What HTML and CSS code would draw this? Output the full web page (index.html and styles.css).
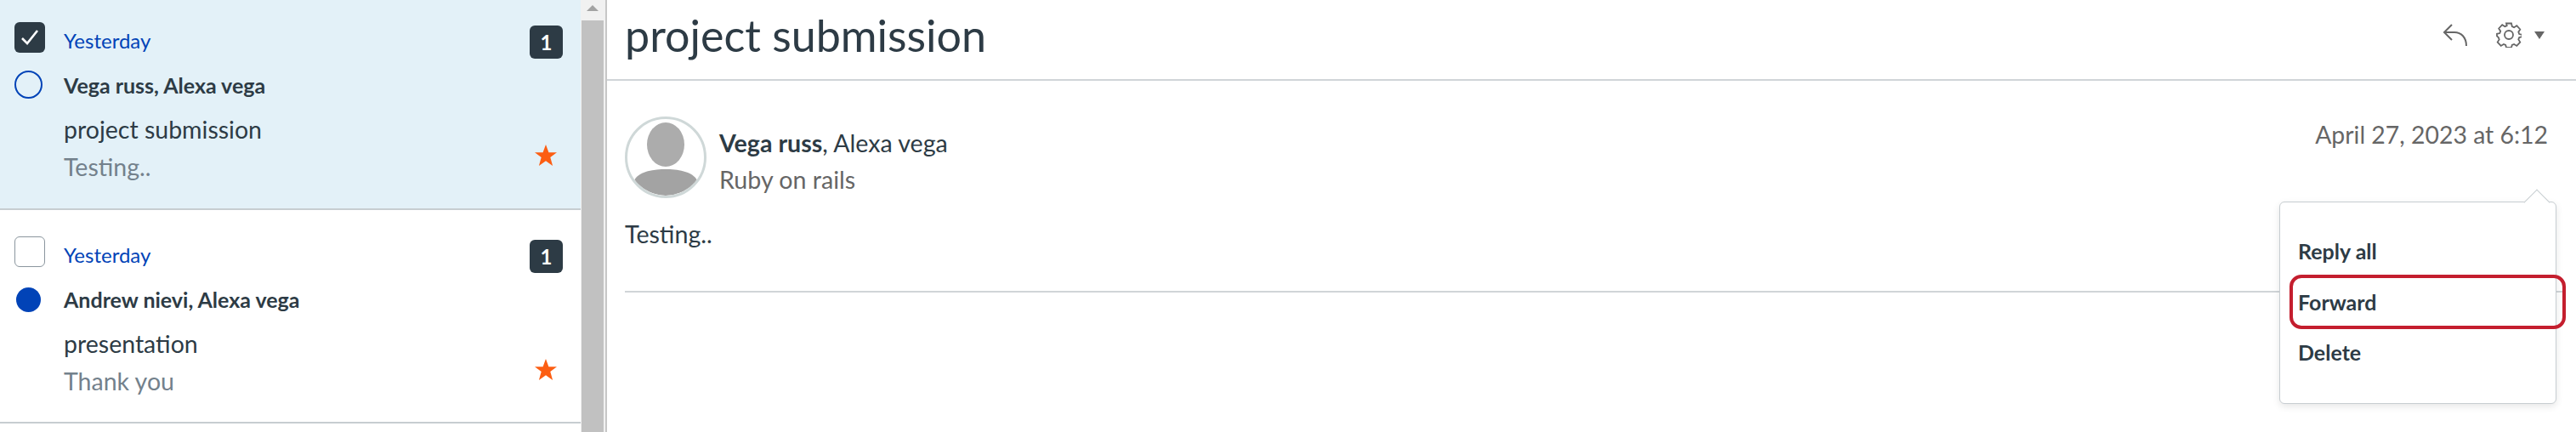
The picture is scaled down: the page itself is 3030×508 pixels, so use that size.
FILE: index.html
```html
<!DOCTYPE html>
<html lang="en">
<head>
    <meta charset="UTF-8">
    <title>Conversations</title>
    <link rel="stylesheet" href="styles.css">
</head>
<body>
    <div class="app">
        <div class="list-pane">
            <div class="list">
                <div class="row selected">
                    <div class="row-marks">
                        <span class="check checked">
                            <svg width="22" height="22" viewBox="0 0 22 22" fill="none" stroke="#fff" stroke-width="2.600"><path d="M2 12l6 6L20 3"></path></svg>
                        </span>
                        <span class="dot dot-read"></span>
                    </div>
                    <div class="row-text">
                        <div class="when">Yesterday</div>
                        <div class="who">Vega russ, Alexa vega</div>
                        <div class="subject">project submission</div>
                        <div class="preview">Testing..</div>
                    </div>
                    <div class="row-side">
                        <span class="badge">1</span>
                        <svg class="star" width="26" height="25" viewBox="0 0 26 25"><path fill="#fc5e13" d="M13 0l3.4 9.2H26l-7.7 5.900 2.800 9.900L13 19.200 4.900 25l2.800-9.900L0 9.200h9.600z"></path></svg>
                    </div>
                </div>
                <div class="row">
                    <div class="row-marks">
                        <span class="check"></span>
                        <span class="dot dot-unread"></span>
                    </div>
                    <div class="row-text">
                        <div class="when">Yesterday</div>
                        <div class="who">Andrew nievi, Alexa vega</div>
                        <div class="subject">presentation</div>
                        <div class="preview">Thank you</div>
                    </div>
                    <div class="row-side">
                        <span class="badge">1</span>
                        <svg class="star" width="26" height="25" viewBox="0 0 26 25"><path fill="#fc5e13" d="M13 0l3.4 9.2H26l-7.7 5.900 2.800 9.900L13 19.200 4.900 25l2.800-9.900L0 9.200h9.600z"></path></svg>
                    </div>
                </div>
            </div>
            <div class="scrollbar">
                <div class="scroll-up"><span class="scroll-arrow"></span></div>
                <div class="scroll-thumb"></div>
            </div>
        </div>

        <div class="main">
            <div class="header">
                <h1>project submission</h1>
                <div class="header-icons">
                    <svg width="30" height="28" viewBox="0 0 30 28" fill="none" stroke="#666" stroke-width="2"><path d="M11 2L2 11l9 9"></path><path d="M2 11h12c8 0 14 6 14 16"></path></svg>
                    <svg class="gear" width="30" height="30" viewBox="0 0 30 30" fill="none" stroke="#666" stroke-width="1.800"><circle cx="15" cy="15" r="5"></circle><path d="M12 1.500h6l.8 3.700 2.300 1 3.200-2 4 4.300-2 3.200.9 2.300 3.300.8v2.500l-3.300.8-.9 2.300 2 3.200-4 4.300-3.200-2-2.300 1-.8 3.100h-6l-.8-3.100-2.300-1-3.200 2-4-4.300 2-3.200-.9-2.300L1 16.300v-2.500l3.300-.8.900-2.300-2-3.200 4-4.300 3.200 2 2.300-1z"></path></svg>
                    <span class="caret"></span>
                </div>
            </div>
            <div class="message">
                <div class="message-top">
                    <div class="avatar">
                        <svg width="90" height="90" viewBox="0 0 90 90"><ellipse cx="45" cy="30" rx="22" ry="26" fill="#acacac"></ellipse><path d="M8 72c6-11 24-13 37-13s31 2 37 13c-9 11-23 18-37 18S17 83 8 72z" fill="#a3a3a3"></path></svg>
                    </div>
                    <div class="message-who">
                        <div class="names"><b>Vega russ</b>, Alexa vega</div>
                        <div class="course">Ruby on rails</div>
                    </div>
                    <div class="date">April 27, 2023 at 6:12</div>
                </div>
                <p class="body-text">Testing..</p>
            </div>
            <div class="menu">
                <a class="menu-item">Reply all</a>
                <a class="menu-item">Forward</a>
                <a class="menu-item">Delete</a>
                <span class="callout"></span>
            </div>
        </div>
    </div>
</body>
</html>
```

FILE: styles.css
```css
* {
    box-sizing: border-box;
}

html, body {
    margin: 0;
    height: 100%;
    overflow: hidden;
}

body {
    font-family: Lato, "Noto Sans", sans-serif;
    color: #2d3b45;
    background-color: white;
}

.app {
    display: flex;
    height: 508px;
}

/* left column */
.list-pane {
    display: flex;
    width: 714px;
    flex: none;
    border-right: 2px solid #c7c7c7;
}

.list {
    width: 683px;
}

.row {
    display: flex;
    height: 251px;
    padding: 31px 21px 0 17px;
    border-bottom: 2px solid #c7cdd1;
}

.row.selected {
    height: 247px;
    padding-top: 26px;
    background-color: #e3f1f8;
}

.row-marks {
    width: 58px;
    flex: none;
}

.check {
    display: flex;
    align-items: center;
    justify-content: center;
    width: 36px;
    height: 36px;
    border: 1px solid #8b969e;
    border-radius: 6px;
    background-color: white;
}

.check.checked {
    border: none;
    background-color: #2d3b45;
}

.dot {
    display: block;
    width: 33px;
    height: 33px;
    margin-top: 21px;
    border-radius: 50%;
}

.dot-read {
    border: 2px solid #0143b7;
}

.dot-unread {
    width: 29px;
    height: 29px;
    margin: 24px 0 0 2px;
    background-color: #0143b7;
}

.row-text {
    flex: 1;
}

.when {
    margin-top: 4px;
    font-size: 24px;
    line-height: 36px;
    color: #0143b7;
}

.who {
    margin-top: 16px;
    font-size: 25px;
    line-height: 36px;
    font-weight: 700;
}

.subject {
    margin-top: 14px;
    font-size: 28.5px;
    line-height: 40px;
}

.preview {
    margin-top: 4px;
    font-size: 28.5px;
    line-height: 40px;
    color: #73818c;
}

.row-side {
    display: flex;
    flex-direction: column;
    align-items: center;
    width: 39px;
    flex: none;
}

.badge {
    width: 39px;
    height: 39px;
    margin-top: 4px;
    border-radius: 6px;
    background-color: #2d3b45;
    color: white;
    font-size: 24px;
    font-weight: 700;
    line-height: 39px;
    text-align: center;
}

.star {
    margin-top: 101px;
    margin-right: 2px;
}

.scrollbar {
    width: 29px;
    flex: none;
    padding: 0 2px 0 1px;
    background-color: #f1f1f1;
}

.scroll-up {
    display: flex;
    justify-content: center;
    height: 24px;
    padding-top: 6px;
}

.scroll-arrow {
    width: 0;
    height: 0;
    border-left: 7px solid transparent;
    border-right: 7px solid transparent;
    border-bottom: 7px solid #a3a3a3;
}

.scroll-thumb {
    height: 484px;
    background-color: #c1c1c1;
}

/* right column */
.main {
    position: relative;
    flex: 1;
    min-width: 0;
}

.header {
    display: flex;
    align-items: center;
    justify-content: space-between;
    height: 95px;
    padding: 0 37px 11px 21px;
    border-bottom: 2px solid #d0d5d8;
}

.header h1 {
    margin: 0;
    font-size: 52px;
    font-weight: 400;
    line-height: 84px;
}

.header-icons {
    display: flex;
    align-items: center;
    gap: 33px;
}

.caret {
    width: 0;
    height: 0;
    margin-left: -18px;
    border-left: 6px solid transparent;
    border-right: 6px solid transparent;
    border-top: 9px solid #666;
}

.message {
    height: 249px;
    margin: 0 14px 0 21px;
    padding: 42px 19px 0 0;
    border-bottom: 2px solid #d0d5d8;
}

.message-top {
    display: flex;
}

.avatar {
    display: flex;
    align-items: flex-end;
    justify-content: center;
    width: 96px;
    height: 96px;
    flex: none;
    overflow: hidden;
    border: 3px solid #cfd8d8;
    border-radius: 50%;
}

.message-who {
    flex: 1;
    margin-left: 15px;
    padding-top: 10px;
    font-size: 28.6px;
    line-height: 43px;
}

.names b {
    font-weight: 700;
}

.course, .date {
    color: #666;
}

.date {
    font-size: 28.4px;
    line-height: 43px;
}

.body-text {
    margin: 22px 0 0;
    font-size: 28.6px;
    line-height: 40px;
}

/* popup menu */
.menu {
    position: absolute;
    top: 237px;
    left: 1967px;
    display: flex;
    flex-direction: column;
    gap: 19.5px;
    width: 326px;
    height: 238px;
    padding: 37px 21px;
    background-color: white;
    border: 1px solid #c7cdd1;
    border-radius: 6px;
    box-shadow: 0 3px 8px rgba(0,0,0,0.1);
}

.menu::before {
    content: "";
    position: absolute;
    top: -11px;
    right: 11px;
    width: 21px;
    height: 21px;
    background-color: white;
    border-top: 1px solid #c7cdd1;
    border-left: 1px solid #c7cdd1;
    transform: rotate(45deg);
}

.menu-item {
    font-size: 25px;
    font-weight: 700;
    line-height: 40px;
}

.callout {
    position: absolute;
    top: 85px;
    left: 11px;
    width: 325px;
    height: 64px;
    border: 4px solid #c41e2e;
    border-radius: 14px;
}
```
